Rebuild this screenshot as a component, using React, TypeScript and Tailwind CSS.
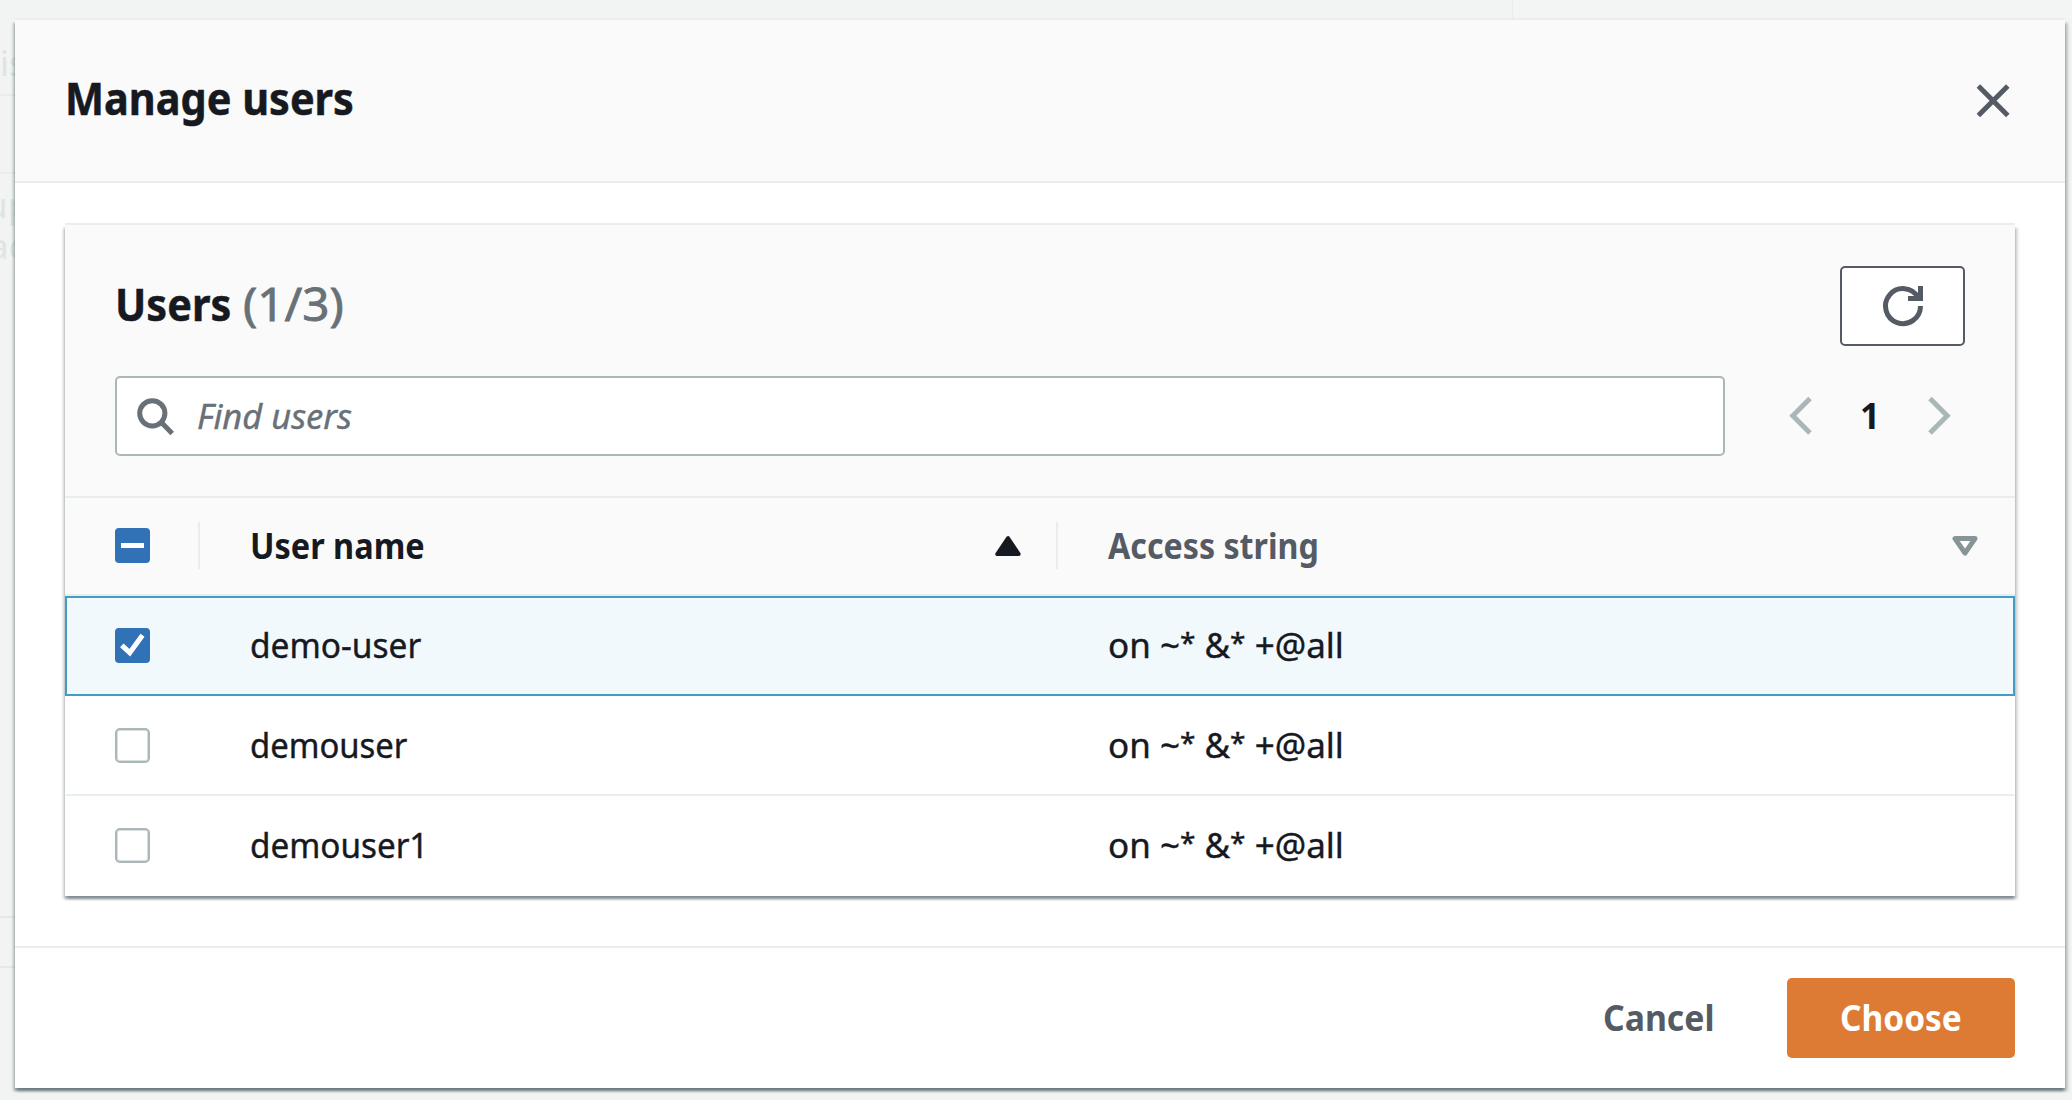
import React from "react";

type User = { name: string; fit: string; access: string; selected: boolean };

const users: User[] = [
  { name: "demo-user", fit: "scale-x-[0.957]", access: "on ~* &* +@all", selected: true },
  { name: "demouser", fit: "scale-x-[0.938]", access: "on ~* &* +@all", selected: false },
  { name: "demouser1", fit: "scale-x-[0.95]", access: "on ~* &* +@all", selected: false },
];

function Label({ className, children }: { className: string; children: React.ReactNode }) {
  return <span className={`inline-block origin-left whitespace-pre ${className}`}>{children}</span>;
}

function AccessString({ value }: { value: string }) {
  return (
    <Label className="pb-[2px] [-webkit-text-stroke:0.4px_#16191f]">
      {value.split(/(\*)/).map((part, i) =>
        part === "*" ? (
          <span key={i} className="align-[5px] text-[28px] leading-none">
            *
          </span>
        ) : (
          part
        ),
      )}
    </Label>
  );
}

function Checkbox({ state }: { state: "on" | "off" | "mixed" }) {
  if (state === "off") {
    return (
      <span className="mb-px block size-[35px] rounded-[5px] border-2 border-[#aab7b8] bg-white shadow-[inset_0_0_0_1px_rgba(170,183,184,0.45)]" />
    );
  }
  return (
    <svg
      className="mb-[2px] block size-[35px] rounded-[4px] bg-[#3171b6]"
      viewBox="0 0 35 35"
      fill="none"
      stroke="#fff"
      strokeWidth="5"
    >
      {state === "mixed" ? <path d="M6 17.5h23" /> : <path d="M6.8 17.4l8 7.3L27.5 7.3" />}
    </svg>
  );
}

function Backdrop() {
  return (
    <div className="col-start-1 row-start-1 flex h-[1100px] justify-between bg-[#f2f4f3] text-[35px] leading-[41px] text-[#e0e3e3]">
      <div className="flex h-full w-[15px] flex-col overflow-hidden">
        <div className="h-[96px] border-b-2 border-[#eaecec] pt-[42px] whitespace-nowrap">is</div>
        <div className="h-[78px] border-b-2 border-[#eaecec]" />
        <div className="h-[744px] border-b-2 border-[#e6e8e8] pt-[10px]">
          <span className="-ml-[14px] block">up</span>
          <span className="-ml-[11px] block">ac</span>
        </div>
        <div className="h-[50px] border-b-2 border-[#e6e8e8]" />
      </div>
      <div className="h-[18px] w-[560px] border-l border-[#e9ebeb] bg-[#f3f5f4]" />
    </div>
  );
}

export default function App() {
  return (
    <div className="grid h-[1100px] w-[2072px] overflow-hidden font-['Noto_Sans',sans-serif] text-[35px] text-[#16191f]">
      <Backdrop />
      <div
        role="dialog"
        className="col-start-1 row-start-1 mt-5 ml-[15px] flex h-[1068px] w-[2050px] flex-col bg-white shadow-[0_-2px_0_0_#eaeded,0_2.5px_2.5px_0_rgba(0,28,36,0.3),2.5px_2.5px_2.5px_0_rgba(0,28,36,0.2),-2.5px_2.5px_2.5px_0_rgba(0,28,36,0.2)]"
      >
        <header className="flex h-[163px] items-start justify-between border-b-2 border-[#eaeded] bg-[#fafafa] pl-[50px]">
          <h2 className="pt-[47px] text-[45px] leading-[62px] font-bold [-webkit-text-stroke:0.5px_#16191f]">
            <Label className="scale-x-[0.92]">Manage users</Label>
          </h2>
          <button aria-label="Close" className="mt-[61px] mr-[52px]">
            <svg className="size-10" viewBox="0 0 40 40" fill="none" stroke="#545b64" strokeWidth="5">
              <path d="M5.4 5.1l29.4 29.4M34.8 5.1L5.4 34.5" />
            </svg>
          </button>
        </header>

        <main className="px-[50px] pt-[42px]">
          <section className="h-[671px] bg-white shadow-[0_-2px_0_0_#eaeded,0_2.5px_2.5px_0_rgba(0,28,36,0.3),2.5px_2.5px_2.5px_0_rgba(0,28,36,0.15),-2.5px_2.5px_2.5px_0_rgba(0,28,36,0.15)]">
            <div className="h-[273px] border-b-2 border-[#eaeded] bg-[#fafafa] px-[50px] pt-[41px]">
              <div className="flex h-20 justify-between">
                <h3 className="flex pt-[7px] text-[45px] leading-[62px] font-bold">
                  <Label className="w-[128px] scale-x-[0.921] [-webkit-text-stroke:0.5px_#16191f]">Users</Label>
                  <Label className="scale-x-[1.057] font-normal text-[#687078] [-webkit-text-stroke:0.8px_#687078]">
                    (1/3)
                  </Label>
                </h3>
                <button
                  aria-label="Refresh"
                  className="flex h-20 w-[125px] items-center justify-center rounded-[5px] border-2 border-[#545b64] bg-white"
                >
                  <svg className="size-10 overflow-visible" viewBox="0 0 16 16" fill="none" stroke="#545b64" strokeWidth="2">
                    <path d="M15 8a7 7 0 1 1-.9-3.4" />
                    <path d="M15 0v5h-5" />
                  </svg>
                </button>
              </div>
              <div className="mt-[30px] flex">
                <div className="flex h-20 w-[1610px] items-center rounded-[5px] border-2 border-[#aab7b8] bg-white pl-[20px]">
                  <svg className="size-10" viewBox="0 0 40 40" fill="none" stroke="#687078" strokeWidth="5">
                    <circle cx="15.3" cy="17.3" r="12.6" />
                    <path d="M24 26l11.2 11.4" />
                  </svg>
                  <Label className="ml-[20px] scale-x-[0.985] text-[#687078] italic [-webkit-text-stroke:0.4px_#687078]">
                    Find users
                  </Label>
                </div>
                <nav className="flex h-20 items-center">
                  <svg className="ml-[60px] h-10 w-[30px]" viewBox="0 0 30 40" fill="none" stroke="#aab7b8" strokeWidth="5">
                    <path d="M25 2.4L7.8 19.7 25 37" />
                  </svg>
                  <span className="ml-[45px] w-5 font-bold">1</span>
                  <svg className="ml-[45px] h-10 w-[30px]" viewBox="0 0 30 40" fill="none" stroke="#aab7b8" strokeWidth="5">
                    <path d="M5 2.4L22.2 19.7 5 37" />
                  </svg>
                </nav>
              </div>
            </div>

            <div className="flex h-[98px] items-center border-b-2 border-[#eaeded] bg-[#fafafa] pl-[50px] font-bold">
              <Checkbox state="mixed" />
              <span className="mb-[2px] ml-12 h-[47px] w-0.5 bg-[#eaeded]" />
              <Label className="ml-[50px] w-[745px] scale-x-[0.927]">User name</Label>
              <svg className="h-5 w-[26px]" viewBox="0 0 26 20" fill="#16191f" stroke="#16191f" strokeWidth="4" strokeLinejoin="round">
                <path d="M13 2.2L2.3 18h21.4z" />
              </svg>
              <span className="mb-[2px] ml-[35px] h-[47px] w-0.5 bg-[#eaeded]" />
              <Label className="ml-[50px] w-[844px] scale-x-[0.92] text-[#545b64]">Access string</Label>
              <svg className="h-5 w-[26px]" viewBox="0 0 26 20" fill="#fff" stroke="#879596" strokeWidth="5" strokeLinejoin="round">
                <path d="M13 17L3 2.6h20z" />
              </svg>
            </div>

            {users.map((user, index) => (
              <div
                key={user.name}
                className={`flex h-[100px] items-center pl-12 ${
                  user.selected
                    ? "border-2 border-[#449cc5] bg-[#f2f9fd]"
                    : index < users.length - 1
                      ? "border-x-2 border-y-2 border-x-transparent border-t-transparent border-b-[#eaeded]"
                      : "border-2 border-transparent"
                }`}
              >
                <Checkbox state={user.selected ? "on" : "off"} />
                <Label className={`ml-[100px] w-[858px] pb-[2px] [-webkit-text-stroke:0.4px_#16191f] ${user.fit}`}>
                  {user.name}
                </Label>
                <AccessString value={user.access} />
              </div>
            ))}
          </section>
        </main>

        <footer className="mt-[50px] flex h-[142px] items-center justify-end border-t-2 border-[#eaeded] pr-[50px] font-bold">
          <button className="mr-[68px] text-[#545b64]">
            <Label className="scale-x-[0.965]">Cancel</Label>
          </button>
          <button className="flex h-20 w-[228px] items-center justify-center rounded-[5px] bg-[#dd7a33] pl-[5px] text-white">
            <Label className="scale-x-[0.956]">Choose</Label>
          </button>
        </footer>
      </div>
    </div>
  );
}
